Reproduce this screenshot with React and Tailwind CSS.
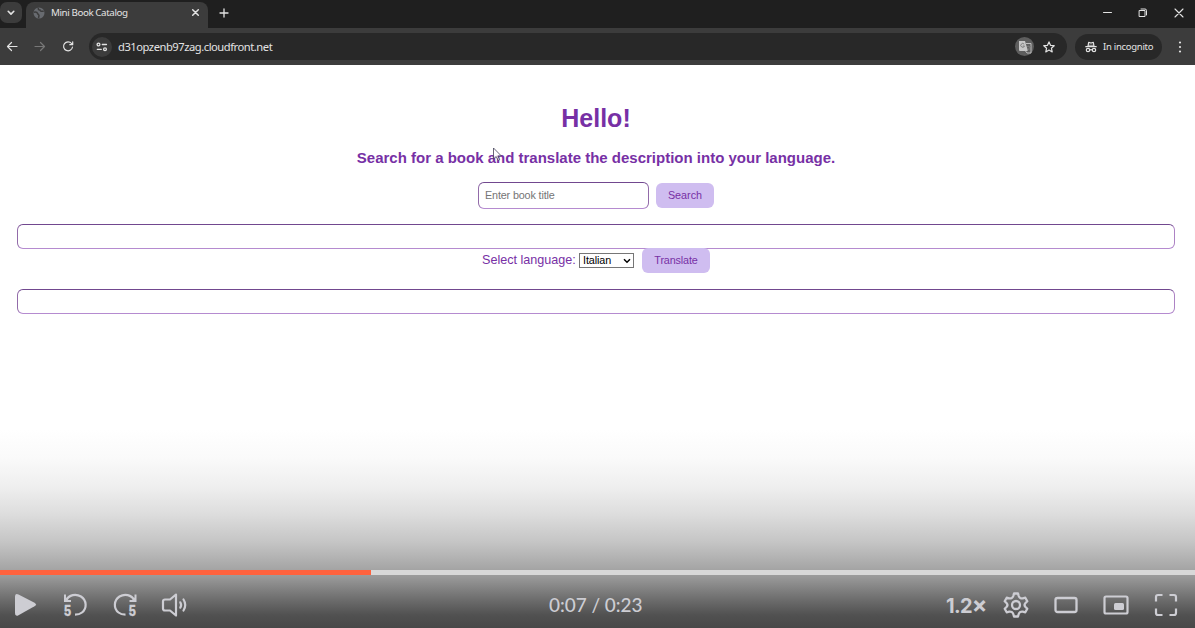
import React from "react";

const stroke = { fill: "none", stroke: "currentColor", strokeLinecap: "round", strokeLinejoin: "round" };

function BrowserChrome() {
  return (
    <header className="h-[65px] shrink-0 bg-[#3c3c3c] font-['Noto_Sans',sans-serif] text-[#e3e3e3]">
      <div className="flex h-7 bg-[#1f1f1f]">
        <div className="flex h-7 w-[26px] rounded-br-lg">
          <button className="mt-[2px] flex h-[21px] w-[22px] items-center justify-center rounded-[7px] bg-[#3c3c3c]">
            <svg width="8" height="6" viewBox="0 0 8 6" {...stroke} strokeWidth="1.6"><path d="M1.2 1.3 4 4.1l2.800-2.800" /></svg>
          </button>
        </div>
        <div className="mt-[2px] flex h-[26px] w-[182px] items-center rounded-t-lg bg-[#3c3c3c] pr-2 pb-1 pl-[7px]">
          <svg width="12" height="12" viewBox="0 0 12 12"><circle cx="6" cy="6" r="5.500" fill="#686b70" /><path d="M1 5.200c2-.4 3.200 0 3.600 1.300.3 1 1.500.8 1.400 2.200L5.500 11M5.500.8c-.7 1.500.2 2 1.500 2.200.2 1.600 1.500 1.500 3.700 1.200" fill="none" stroke="#3c3c3c" strokeWidth="1.500" /></svg>
          <span className="ml-[6px] grow text-[9.800px] leading-3 tracking-[-0.42px] whitespace-nowrap">Mini Book Catalog</span>
          <svg className="mb-px" width="9" height="9" viewBox="0 0 9 9" {...stroke} strokeWidth="1.500"><path d="m1.700 1.700 5.600 5.600m0-5.600L1.700 7.300" /></svg>
        </div>
        <svg className="mt-2 ml-[11px]" width="10" height="10" viewBox="0 0 10 10" {...stroke} strokeWidth="1.300"><path d="M5 1v8M1 5h8" /></svg>
        <div className="mt-[7px] ml-auto flex h-[11px] items-center gap-[26px] pr-[11px]">
          <svg width="10" height="10" viewBox="0 0 10 10" {...stroke} strokeWidth="1"><path d="M1.500 4.500h8" /></svg>
          <svg width="10" height="10" viewBox="0 0 10 10" {...stroke} strokeWidth="1"><path d="M1.500 2.500h5.500v6H1.500zM3 1h4q1.500 0 1.500 1.500V7" /></svg>
          <svg width="10" height="10" viewBox="0 0 10 10" {...stroke} strokeWidth="1.100"><path d="m1 1 8 8m0-8L1 9" /></svg>
        </div>
      </div>
      <div className="flex h-[37px] items-center">
        <div className="flex w-[89px] items-center gap-4 pl-[6px]">
          <svg width="12" height="12" viewBox="0 0 12 12" {...stroke} strokeWidth="1.200"><path d="M11 5.500H1.500M5.500 1.500l-4 4 4 4" /></svg>
          <svg className="text-[#777]" width="12" height="12" viewBox="0 0 12 12" {...stroke} strokeWidth="1.200"><path d="M1 5.500h9.500M6.500 1.500l4 4-4 4" /></svg>
          <svg width="12" height="12" viewBox="0 0 12 12" {...stroke} strokeWidth="1.200"><path d="M10.500 6A4.500 4.500 0 1 1 9.600 2.500L10.700 3.700M10.700 .8v2.900H7.800" /></svg>
        </div>
        <div className="flex h-[27px] w-[978px] items-center rounded-full bg-[#282828] pr-[12px] pl-[3px]">
          <span className="flex h-5 w-5 items-center justify-center rounded-full bg-[#3c3c3c]">
            <svg width="12" height="10" viewBox="0 0 12 10" {...stroke} strokeWidth="1.300"><circle cx="2.500" cy="2.500" r="1.400" /><path d="M6.300 2.500h4.200M1.300 7.300h4" /><circle cx="9" cy="7.300" r="1.400" /></svg>
          </span>
          <span className="ml-[6px] grow text-[11.200px] leading-4 tracking-[-0.470px]">d31opzenb97zag.cloudfront.net</span>
          <span className="flex h-[19px] w-[19px] items-center justify-center rounded-full bg-[#5e5e5e]">
            <svg width="14" height="14" viewBox="0 0 14 14"><path d="M1 1h6l3 10H2q-1 0-1-1z" fill="#c7c7c7" /><path d="M8 3.500h5v9.500H9l-1.500-2" fill="none" stroke="#bdbdbd" /><path d="M6.200 4.200a1.900 1.900 0 1 0 .3 1.800H4.800M9 6.500h3.500M10.700 5.500v1M12 6.500q-.6 2.500-2.500 4M9.500 8l2.500 2.500" fill="none" stroke="#777" strokeWidth=".9" /></svg>
          </span>
          <svg className="ml-[9px]" width="12" height="12" viewBox="0 0 12 12" {...stroke} strokeWidth="1.200"><path d="m6 .9 1.500 3.400 3.700.4-2.800 2.500.8 3.700L6 9 2.800 10.900l.8-3.700L.8 4.700l3.700-.4z" /></svg>
        </div>
        <div className="ml-2 flex h-[26px] w-[87px] items-center rounded-full bg-[#282828] pl-[10px]">
          <svg width="12" height="12" viewBox="0 0 12 12" {...stroke} strokeWidth="1.200"><path d="M3 5 3.700 1.300 6 2l2.300-.7L9 5z" fill="currentColor" fillOpacity=".2" /><path d="M.8 5.700h10.400M4.700 9q1.300-.8 2.600 0" /><circle cx="3" cy="9" r="1.700" /><circle cx="9" cy="9" r="1.700" /></svg>
          <span className="ml-[6px] text-[9.500px] leading-3 tracking-[-0.280px] whitespace-nowrap">In incognito</span>
        </div>
        <svg className="ml-[15px]" width="5" height="12" viewBox="0 0 5 12" fill="currentColor"><circle cx="3" cy="1.500" r="1.100" /><circle cx="3" cy="6" r="1.100" /><circle cx="3" cy="10.500" r="1.100" /></svg>
      </div>
    </header>
  );
}

function ResultBox() {
  return <div className="mr-5 ml-[17px] h-[25px] rounded-[6px] border border-t-[#71488f] border-r-[#ad83c4] border-b-[#b58bd0] border-l-[#926ba9]" />;
}

function CatalogPage() {
  return (
    <main className="relative h-[365px] shrink-0 overflow-hidden bg-white pt-[37px] font-['Liberation_Sans',Arial,sans-serif] text-[#7730a5]">
      <h1 className="h-[32px] pr-[3px] text-center text-[25px] leading-[32px] font-bold">Hello!</h1>
      <h2 className="mt-[14px] h-5 pr-[3px] text-center text-[15px] leading-5 font-bold">Search for a book and translate the description into your language.</h2>
      <form className="mt-[14px] flex h-[27px] items-center pl-[478px]" onSubmit={(e) => e.preventDefault()}>
        <input aria-label="Book title" placeholder="Enter book title" className="h-[27px] w-[171px] rounded-[6px] border border-t-[#71488f] border-r-[#926ba9] border-b-[#b58bd0] border-l-[#926ba9] px-[6px] pb-[2px] text-[10.800px] tracking-[-0.150px] outline-none placeholder:text-[#757575]" />
        <button className="ml-[7px] h-[25px] w-[58px] rounded-[6px] bg-[#cfbdf0] text-[10.800px]">Search</button>
      </form>
      <div className="mt-[15px]"><ResultBox /></div>
      <div className="-mt-px flex h-[25px] items-center pl-[482px]">
        <label htmlFor="language" className="w-[97px] pb-[2px] text-[12.600px] leading-4 whitespace-nowrap">Select language:</label>
        <span className="relative flex h-[15px] w-[55px] items-center border border-[#767676] bg-white">
          <select id="language" className="h-full w-full appearance-none pl-[3px] text-[10.800px] leading-[13px] tracking-[-0.100px] text-black"><option>Italian</option></select>
          <svg className="pointer-events-none absolute right-[2px]" width="8" height="6" viewBox="0 0 8 6" fill="none" stroke="black" strokeWidth="1.500"><path d="m1 1.200 3 3 3-3" /></svg>
        </span>
        <button className="ml-2 h-[25px] w-[68px] shrink-0 rounded-[6px] bg-[#cfbdf0] text-[10.800px] tracking-[-0.150px]">Translate</button>
      </div>
      <div className="mt-[16px]"><ResultBox /></div>
      <svg className="absolute top-[82px] left-[492px]" width="11" height="15" viewBox="0 0 11 15"><path d="M1.500 1v11l2.700-2.500 2 4 1.500-.8-1.800-3.700 3.300-.2z" fill="white" fillOpacity=".8" stroke="#424057" strokeWidth=".8" /></svg>
    </main>
  );
}

function Player() {
  return (
    <footer className="h-[198px] shrink-0 bg-[linear-gradient(to_bottom,#ffffff_0px,#fafafa_28px,#eeeeee_58px,#dddddd_84px,#c5c5c5_112px,#a5a5a5_139px,#999999_147px,#6c6c6c_170px,#515151_185px,#484848_198px)] pt-[140px]">
      <div className="h-[5px] bg-[#d8d8d8]"><div className="h-full w-[371px] bg-[#ff623e]" /></div>
      <div className="flex h-[53px] items-center pt-[7px] font-['Inter',sans-serif] text-[#cdcdd3]">
        <div className="flex w-[549px] items-center pl-[13px]">
          <svg width="24" height="26" viewBox="0 0 24 26" fill="currentColor"><path d="M2 5Q2 .8 5.500 2.500L21.500 10.700q3 1.800 0 3.600L5.500 23.300Q2 25 2 21z" /></svg>
          <svg className="ml-[26px]" width="25" height="26" viewBox="0 0 25 26"><path d="M1 2.500h2v3L5.500 8H8v2H1z" fill="currentColor" /><path d="M3 8.500C6 2.500 13 1.500 18 4.500c6 4 6 12 1 16-2 1.700-4 2.200-7 2.200" fill="none" stroke="currentColor" strokeWidth="2.200" /><text x=".8" y="23.500" fill="currentColor" stroke="currentColor" strokeWidth=".3" className="text-[14px] font-extrabold" textLength="7.500" lengthAdjust="spacingAndGlyphs">5</text></svg>
          <svg className="ml-[25px]" width="25" height="26" viewBox="0 0 25 26"><path d="M23.500 2.500h-2v3L19 8h-2.500v2h7z" fill="currentColor" /><path d="M21.500 8.500C18.500 2.500 11.500 1.500 6.500 4.500c-6 4-6 12-1 16 2 1.700 4 2.200 7 2.200" fill="none" stroke="currentColor" strokeWidth="2.200" /><text x="15.500" y="23.500" fill="currentColor" stroke="currentColor" strokeWidth=".3" className="text-[14px] font-extrabold" textLength="7.500" lengthAdjust="spacingAndGlyphs">5</text></svg>
          <svg className="ml-[23px]" width="28" height="26" viewBox="0 0 28 26" {...stroke} strokeWidth="2.200"><path d="m15 2.500-6 5H4Q2 7.500 2 9.500v7q0 2 2 2h5l6 5zM19.300 10.300q1.700 2.700 0 5.400M22.500 7.500q3.500 5.500 0 11" /></svg>
        </div>
        <span className="w-[397px] pb-px font-['Lato',sans-serif] text-[19px] leading-6 font-medium tracking-[-0.050px]">0:07 / 0:23</span>
        <button className="w-[45px] text-left text-[20px] leading-6 font-bold tracking-[-0.700px] whitespace-nowrap">1.2<span className="text-[23px]">×</span></button>
        <div className="flex items-center">
          <svg className="ml-[11px]" width="28" height="28" viewBox="0 0 28 28" {...stroke} strokeWidth="2.300"><path d="M11.300 5 12 2.500h4l.7 2.500q.4 1.300 1.600 2 1.200.6 2.500.3L23.300 6.700l2 3.500-1.800 1.800q-1.900 2 0 4l1.800 1.800-2 3.500-2.500-.6q-1.300-.3-2.500.3-1.200.7-1.600 2L16 25.500h-4l-.7-2.500q-.4-1.300-1.600-2-1.200-.6-2.500-.3l-2.500.6-2-3.500L4.500 16q1.900-2 0-4l-1.800-1.800 2-3.500 2.500.6q1.300.3 2.500-.3 1.200-.7 1.600-2z" /><circle cx="14" cy="14" r="4" /></svg>
          <svg className="ml-[24px]" width="24" height="18" viewBox="0 0 24 18" {...stroke} strokeWidth="2.300"><rect x="1.500" y="2" width="21" height="14" rx="2" /></svg>
          <svg className="ml-[25px]" width="26" height="20" viewBox="0 0 26 20"><rect x="1.500" y="1.500" width="23" height="17" rx="1.500" fill="none" stroke="currentColor" strokeWidth="2.200" /><rect x="11" y="8" width="10" height="7" rx="1.500" fill="currentColor" /></svg>
          <svg className="ml-[25px]" width="24" height="24" viewBox="0 0 24 24" {...stroke} strokeLinecap="butt" strokeWidth="2.200"><path d="M8.500 2H4Q2 2 2 4v4.500M15.500 2H20q2 0 2 2v4.500M8.500 22H4q-2 0-2-2v-4.500M15.500 22H20q2 0 2-2v-4.500" /></svg>
        </div>
      </div>
    </footer>
  );
}

export default function App() {
  return <div className="flex h-[628px] w-[1195px] flex-col overflow-hidden"><BrowserChrome /><CatalogPage /><Player /></div>;
}
